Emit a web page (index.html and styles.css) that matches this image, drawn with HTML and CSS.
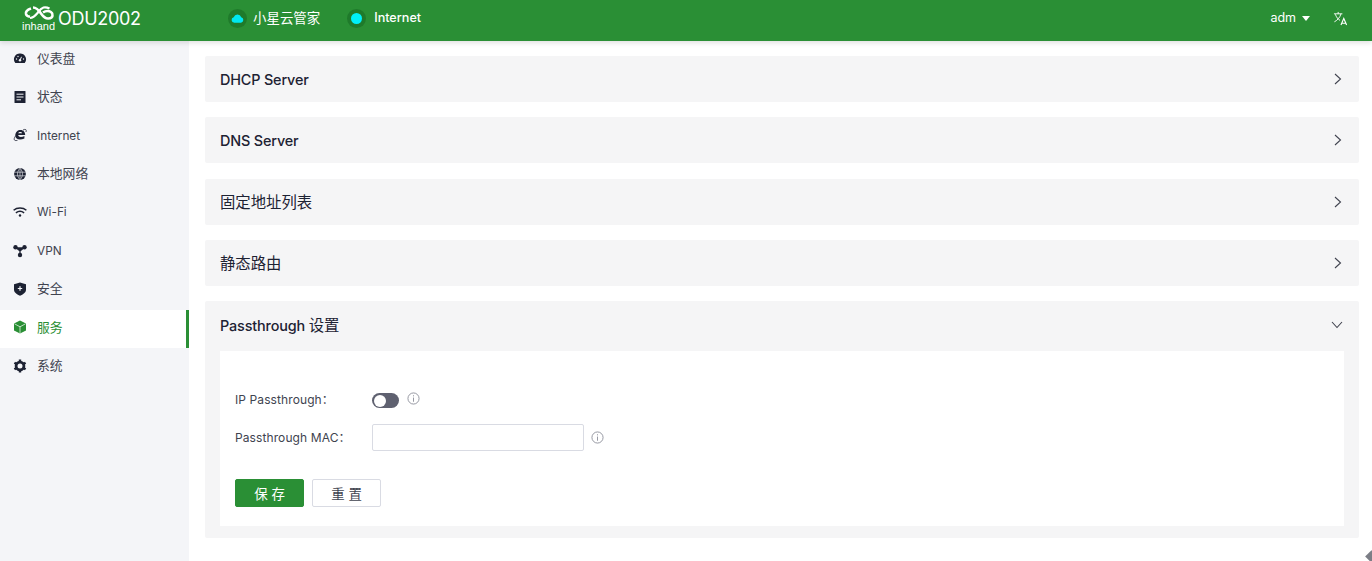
FILE: index.html
```html
<!DOCTYPE html>
<html lang="zh">
<head>
<meta charset="utf-8">
<title>ODU2002</title>
<link rel="stylesheet" href="styles.css">
</head>
<body>
<header class="topbar">
  <div class="brand">
    <svg class="logo" viewBox="0 0 33 30" width="33" height="30" fill="none">
      <path d="M9 3.500C6 4.500 3.500 6.500 4 9c.4 1.700 2 2.500 4 2.800M11 2.500c4 0 6 3 8 6 2 2.800 4 5 7 5 3 .1 4.800-1.700 4.500-3.800C30.300 7.600 28 6 25.500 6 24 6 22.500 6.500 21 7.500" stroke="#fff" stroke-width="2.600"/>
      <path d="M8 13c3.500 0 5.500-2.500 7.500-5 1.500-2 3-4.500 6-5.500 2-.5 4 0 6 1" stroke="#fff" stroke-width="2.200"/>
      <text x="0" y="25" class="logo-text" textLength="33" lengthAdjust="spacingAndGlyphs">inhand</text>
    </svg>
    <span class="product">ODU2002</span>
  </div>
  <div class="status status-first">
    <span class="status-dot">
      <svg viewBox="0 0 14 10" width="13" height="10"><path d="M3.5 10a3 3 0 0 1-.6-5.900A4.300 4.300 0 0 1 11 4.300 2.900 2.900 0 0 1 10.800 10z" fill="#00e8f0"/></svg>
    </span>
    <span>小星云管家</span>
  </div>
  <div class="status">
    <span class="status-dot"><span class="dot"></span></span>
    <span class="status-strong">Internet</span>
  </div>
  <div class="top-right">
    <span class="user">adm</span>
    <span class="caret"></span>
    <svg class="lang" viewBox="0 0 16 16" width="15" height="15" fill="none" stroke="#fff" stroke-width="1">
      <path d="M1 3h9M5.500 1v2M8.500 3C7.500 7 4.500 10 1.500 11.500M2.500 3.500c1 3 3 5.500 5 6.500"/>
      <path d="M8.500 15l3-7 3 7M9.700 13h3.600" stroke-width="1.200"/>
    </svg>
  </div>
</header>
<div class="layout">
  <nav class="sidebar">
    <a class="nav-item">
      <svg class="nav-icon" viewBox="0 0 14 14"><path d="M7 1.500a5.900 5.900 0 0 1 4.700 9.600H2.300A5.900 5.900 0 0 1 7 1.500z" fill="#1d2233"/><circle cx="7" cy="8.300" r="1.200" fill="#f4f5f8"/><path d="M7 8.300l1.500-3.500" stroke="#f4f5f8" stroke-width="1"/><circle cx="3.500" cy="7" r=".7" fill="#f4f5f8"/><circle cx="10.500" cy="7" r=".7" fill="#f4f5f8"/><circle cx="5" cy="4.500" r=".7" fill="#f4f5f8"/></svg>
      <span>仪表盘</span>
    </a>
    <a class="nav-item">
      <svg class="nav-icon" viewBox="0 0 14 14"><rect x="1.500" y="1" width="11" height="12" rx=".6" fill="#1d2233"/><path d="M3.500 4.200h7M3.500 7h7M3.500 9.800h4.500" stroke="#f4f5f8" stroke-width="1"/></svg>
      <span>状态</span>
    </a>
    <a class="nav-item">
      <svg class="nav-icon" viewBox="0 0 14 14" fill="none"><path d="M2.300 7.500c0-3.500 2.500-5.500 5.200-5.500 3 0 4.700 2.200 4.700 5H5.200c.1 2.300 3.500 2.600 6.200 .9v2.500C7 12.300 2.300 11.500 2.300 7.500zM5.200 5.200h3.900C9 3.500 5.600 3.500 5.200 5.200z" fill="#1d2233"/><path d="M3 7.500C.3 10.500 .5 13.500 4.500 12.300M10 2c2.500-1.300 3.800-.5 3 2" stroke="#1d2233" stroke-width=".8"/></svg>
      <span class="nav-latin">Internet</span>
    </a>
    <a class="nav-item">
      <svg class="nav-icon" viewBox="0 0 14 14"><circle cx="7" cy="7" r="5.900" fill="#1d2233"/><path d="M1.300 5.200h11.400M1.300 8.800h11.400M7 1.300v11.400M7 1.300C3.700 4.500 3.700 9.500 7 12.700M7 1.300c3.300 3.200 3.300 8.200 0 11.400" stroke="#f4f5f8" stroke-width=".6" fill="none"/></svg>
      <span>本地网络</span>
    </a>
    <a class="nav-item">
      <svg class="nav-icon" viewBox="0 0 14 14" fill="none" stroke="#1d2233" stroke-width="1.500"><path d="M.6 5.200c3.500-3 9.300-3 12.800 0M2.900 7.800c2.500-2 5.700-2 8.200 0"/><circle cx="7" cy="10.500" r="1.200" fill="#1d2233" stroke="none"/></svg>
      <span class="nav-latin">Wi-Fi</span>
    </a>
    <a class="nav-item">
      <svg class="nav-icon" viewBox="0 0 14 14" fill="#1d2233"><circle cx="2.500" cy="3.200" r="2.200"/><circle cx="11.500" cy="3.200" r="2.200"/><circle cx="7" cy="11" r="2.200"/><path d="M2.500 3.200L7 7l4.500-3.800M7 7v4" stroke="#1d2233" stroke-width="1.300"/></svg>
      <span class="nav-latin">VPN</span>
    </a>
    <a class="nav-item">
      <svg class="nav-icon" viewBox="0 0 14 14"><path d="M7 .5l6 1.800v5.400c0 2.800-3 4.800-6 6-3-1.200-6-3.200-6-6V2.300z" fill="#1d2233"/><path d="M7 4.300v4.400M4.800 6.500h4.400" stroke="#f4f5f8" stroke-width="1.200"/></svg>
      <span>安全</span>
    </a>
    <a class="nav-item nav-active">
      <svg class="nav-icon" viewBox="0 0 14 14"><path d="M7 .5l6 3v7L7 13.500l-6-3v-7z" fill="#2a8f35"/><path d="M1.500 3.800L7 6.800l5.500-3M7 6.800v6.700" stroke="#fff" stroke-width=".7" fill="none"/></svg>
      <span>服务</span>
    </a>
    <a class="nav-item">
      <svg class="nav-icon" viewBox="0 0 14 14" fill="none"><circle cx="7" cy="7" r="3.900" stroke="#1d2233" stroke-width="2.800"/><path d="M7 .5v2M7 11.500v2M1.400 3.800l1.700 1M10.900 9.200l1.700 1M1.400 10.200l1.700-1M10.900 4.800l1.700-1" stroke="#1d2233" stroke-width="2.400"/></svg>
      <span>系统</span>
    </a>
  </nav>
  <main class="content">
    <section class="panel">
      <div class="panel-head"><h2>DHCP Server</h2><svg class="chev" viewBox="0 0 10 12" width="10" height="12" fill="none"><path d="M2 1l5.500 5L2 11"/></svg></div>
    </section>
    <section class="panel">
      <div class="panel-head"><h2>DNS Server</h2><svg class="chev" viewBox="0 0 10 12" width="10" height="12" fill="none"><path d="M2 1l5.500 5L2 11"/></svg></div>
    </section>
    <section class="panel">
      <div class="panel-head"><h2><span class="title-cjk">固定地址列表</span></h2><svg class="chev" viewBox="0 0 10 12" width="10" height="12" fill="none"><path d="M2 1l5.500 5L2 11"/></svg></div>
    </section>
    <section class="panel">
      <div class="panel-head"><h2><span class="title-cjk">静态路由</span></h2><svg class="chev" viewBox="0 0 10 12" width="10" height="12" fill="none"><path d="M2 1l5.500 5L2 11"/></svg></div>
    </section>
    <section class="panel panel-open">
      <div class="panel-head panel-head-open"><h2>Passthrough <span class="title-cjk">设置</span></h2><svg class="chev" viewBox="0 0 12 10" width="12" height="10" fill="none"><path d="M1 2l5 5.500L11 2"/></svg></div>
      <div class="panel-body">
        <div class="form-row">
          <label class="form-label">IP Passthrough：</label>
          <span class="switch"><span class="knob"></span></span>
          <svg class="info info-switch" viewBox="0 0 14 14" width="13" height="13" fill="none"><circle cx="7" cy="7" r="6"/><path d="M7 6v4.500M7 3.500v1.200"/></svg>
        </div>
        <div class="form-row">
          <label class="form-label">Passthrough MAC：</label>
          <input class="text-input" type="text">
          <svg class="info" viewBox="0 0 14 14" width="13" height="13" fill="none"><circle cx="7" cy="7" r="6"/><path d="M7 6v4.500M7 3.500v1.200"/></svg>
        </div>
        <div class="actions">
          <button class="btn btn-primary">保 存</button>
          <button class="btn">重 置</button>
        </div>
      </div>
    </section>
  </main>
</div>
<span class="corner"></span>
</body>
</html>
```
FILE: styles.css
```css
* { box-sizing: border-box; }
html, body { height: 100%; }
body {
  margin: 0;
  height: 561px;
  overflow: hidden;
  background: #fff;
  color: #1d2233;
  font-family: Inter, "Noto Sans CJK SC", sans-serif;
  font-size: 13.44px;
  line-height: 1.5;
  display: flex;
  flex-direction: column;
}
.topbar {
  height: 41px;
  flex: none;
  background: #2a8f35;
  color: #fff;
  display: flex;
  align-items: center;
  padding-bottom: 5px;
  box-shadow: 0 2px 5px rgba(0,0,0,.12);
  position: relative;
  z-index: 1;
}
.brand { display: flex; align-items: center; width: 228px; padding-left: 22px; }
.logo { flex: none; margin-top: 4px; }
.logo-text { fill: #fff; font-size: 11px; font-family: "Liberation Sans", sans-serif; }
.product { font-size: 18px; margin-left: 3px; font-weight: 400; letter-spacing: -.3px; }
.status { display: flex; align-items: center; gap: 6px; font-size: 13.44px; margin-left: 27px; }
.status-first { margin-left: 0; }
.status-strong { font-weight: 500; font-size: 12.600px; margin-left: 2px; }
.status-dot {
  width: 19px; height: 19px; border-radius: 50%;
  background: #1f7a2b;
  display: flex; align-items: center; justify-content: center;
}
.dot { width: 11px; height: 11px; border-radius: 50%; background: #00f0f8; }
.top-right { margin-left: auto; display: flex; align-items: center; padding-right: 24px; }
.user { font-size: 12.500px; }
.caret {
  width: 0; height: 0; margin-left: 6px;
  border-left: 4.500px solid transparent;
  border-right: 4.500px solid transparent;
  border-top: 5px solid #fff;
}
.lang { margin-left: 23px; }
.layout { flex: 1; display: flex; min-height: 0; }
.sidebar { width: 189px; flex: none; background: #f4f5f8; }
.nav-item {
  height: 38.400px;
  display: flex;
  align-items: center;
  gap: 10px;
  padding-left: 13px;
  padding-bottom: 3px;
  color: #40434f;
  font-size: 12.800px;
}
.nav-latin { font-size: 11.800px; margin-top: 2px; }
.nav-icon { width: 14px; height: 14px; flex: none; }
.nav-active { background: #fff; color: #2a8f35; border-right: 3px solid #2a8f35; }
.content {
  flex: 1;
  padding: 15px 13px 0 16px;
  display: flex;
  flex-direction: column;
  gap: 15.300px;
}
.panel { background: #f5f5f6; border-radius: 2px; }
.panel-head {
  height: 46px;
  display: flex;
  align-items: center;
  justify-content: space-between;
  padding: 0 16px 0 15px;
}
.panel-head-open { height: 50px; padding-bottom: 3px; }
.panel-head h2 {
  margin: 2px 0 0;
  font-size: 14.400px;
  font-weight: 500;
  letter-spacing: -.15px;
  color: #1d2233;
}
.panel-head .title-cjk { font-size: 15.360px; font-weight: 400; letter-spacing: 0; }
.chev { stroke: #40434f; stroke-width: 1.100; }
.panel-open { padding-bottom: 12px; }
.panel-body {
  background: #fff;
  margin: 0 15px;
  height: 175px;
  padding: 35px 15px 0;
}
.form-row { display: flex; align-items: center; height: 27px; margin-bottom: 11px; }
.form-label { width: 137px; flex: none; font-size: 12px; color: #40434f; letter-spacing: .1px; }
.switch {
  width: 27px; height: 15px; border-radius: 8px;
  background: #5f6170;
  position: relative;
  margin-top: 2px;
}
.knob {
  position: absolute; left: 1.500px; top: 1.500px;
  width: 12px; height: 12px; border-radius: 50%; background: #fff;
}
.info { stroke: #8f919c; stroke-width: 1; margin-left: 7px; }
.info-switch { margin-left: 8px; margin-top: -3px; }
.text-input {
  width: 212px; height: 27px;
  border: 1px solid #d9dbe3; border-radius: 2px;
  background: #fff; outline: none;
}
.actions { display: flex; gap: 8px; margin-top: 28px; }
.btn {
  width: 69px; height: 28px;
  border: 1px solid #d9dbe3; border-radius: 2px;
  background: #fff; color: #40434f;
  font-family: inherit; font-size: 13.44px;
  padding: 0;
}
.btn-primary { background: #2a8f35; border-color: #2a8f35; color: #fff; }
.corner {
  position: absolute; right: -4px; bottom: 0;
  width: 9px; height: 9px;
  background: #7c7e86;
  transform: rotate(45deg);
}
```
